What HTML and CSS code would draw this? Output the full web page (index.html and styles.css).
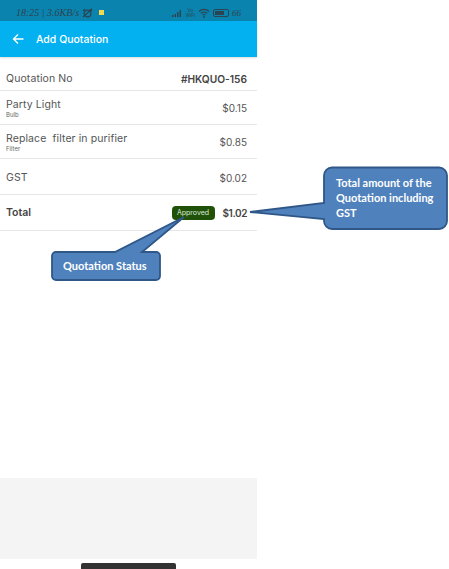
FILE: index.html
```html
<!DOCTYPE html>
<html>
<head>
<meta charset='utf-8'/>
<title>Add Quotation</title>
<link rel="stylesheet" href="styles.css">
</head>
<body>
<div class='phone'>
  <div class='status-bar'>
    <div class='status-left'>
      <span>18:25 | 3.6KB/s</span>
      <svg class='alarm' width='11' height='10' viewBox='0 0 11 10'>
        <circle cx='5.5' cy='5.5' r='3.4' fill='none' stroke='#2c4350' stroke-width='1.2'/>
        <path d='M1 3 3 1M10 3 8 1M1 9 10 1' stroke='#2c4350' stroke-width='1.1'/>
      </svg>
      <span class='note-icon'></span>
    </div>
    <div class='status-right'>
      <svg width='12' height='8' viewBox='0 0 12 8'>
        <path d='M1 6h1.500v2H1zM3.500 5H5v3H3.500zM6 3h1.500v5H6zM8.500 1H10v7H8.500z' fill='#2c4350'/>
      </svg>
      <span class='volte'>Vo<br>WiFi</span>
      <svg width='12' height='10' viewBox='0 0 12 10'>
        <path d='M1 3.500a7 7 0 0 1 10 0M2.800 5.400a4.500 4.500 0 0 1 6.400 0M4.500 7.200a2 2 0 0 1 3 0' fill='none' stroke='#2c4350' stroke-width='1.200'/>
        <circle cx='6' cy='9' r='.9' fill='#2c4350'/>
      </svg>
      <span class='battery'><span class='battery-fill'></span></span>
      <span class='battery-text'>66</span>
    </div>
  </div>
  <div class='app-bar'>
    <svg width='12' height='12' viewBox='0 0 12 12'>
      <path d='M11.500 6H1.500M6 1.500 1.500 6 6 10.500' fill='none' stroke='#fff' stroke-width='1.300'/>
    </svg>
    <span class='app-title'>Add Quotation</span>
  </div>
  <div class='row row-no'>
    <span class='label'>Quotation No</span>
    <span class='quote-no'>#HKQUO-156</span>
  </div>
  <div class='row row-item'>
    <div>
      <div class='label'>Party Light</div>
      <div class='sub'>Bulb</div>
    </div>
    <span class='amount'>$0.15</span>
  </div>
  <div class='row row-item'>
    <div>
      <div class='label'>Replace&nbsp; filter in purifier</div>
      <div class='sub'>Filter</div>
    </div>
    <span class='amount'>$0.85</span>
  </div>
  <div class='row row-gst'>
    <span class='label'>GST</span>
    <span class='amount'>$0.02</span>
  </div>
  <div class='row row-total'>
    <span class='total-label'>Total</span>
    <div class='total-right'>
      <span class='badge'>Approved</span>
      <span class='total-amount'>$1.02</span>
    </div>
  </div>
  <div class='spacer'></div>
  <div class='footer'></div>
  <div class='home-area'><div class='home-bar'></div></div>
</div>
<svg class='callouts' width='449' height='569' viewBox='0 0 449 569'>
  <path class='callout-shape' d='M332 167.500H439a8 8 0 0 1 8 8V221a8 8 0 0 1-8 8H332a8 8 0 0 1-8-8V219L250 212 324 203V175.500a8 8 0 0 1 8-8Z'/>
  <text class='callout-text' x='336' y='187'>Total amount of the</text>
  <text class='callout-text' x='336' y='202'>Quotation including</text>
  <text class='callout-text' x='336' y='217'>GST</text>
  <path class='callout-shape' d='M56 252H115L184 217 142 252H156a4 4 0 0 1 4 4V276a4 4 0 0 1-4 4H56a4 4 0 0 1-4-4V256a4 4 0 0 1 4-4Z'/>
  <text class='callout-text' x='63' y='270'>Quotation Status</text>
</svg>
</body>
</html>
```

FILE: styles.css
```css
* {
    box-sizing: border-box;
}
body {
    margin: 0;
    background: #fff;
    font-family: "Inter", "Liberation Sans", sans-serif;
    overflow: hidden;
}
.phone {
    width: 257px;
    height: 569px;
    display: flex;
    flex-direction: column;
    color: #555;
}
.status-bar {
    height: 21px;
    padding: 4px 16px 0 16px;
    background: #0a84ae;
    display: flex;
    justify-content: space-between;
    align-items: center;
    color: #2c4350;
}
.status-left {
    display: flex;
    align-items: center;
    gap: 3px;
    font-family: "Liberation Serif", serif;
    font-style: italic;
    font-size: 10px;
}
.note-icon {
    width: 5px;
    height: 5px;
    margin-left: 3px;
    background: #f2d94e;
}
.status-right {
    display: flex;
    align-items: center;
    gap: 3px;
}
.volte {
    font-size: 4.500px;
    line-height: 5px;
    text-align: center;
}
.battery {
    width: 16px;
    height: 8px;
    padding: 1px;
    border: 1px solid #2c4350;
    border-radius: 2px;
}
.battery-fill {
    display: block;
    width: 9px;
    height: 100%;
    background: #2c4350;
}
.battery-text {
    font-family: "Liberation Serif", serif;
    font-style: italic;
    font-size: 9px;
}
.app-bar {
    height: 36px;
    padding-left: 12px;
    background: #03b1f1;
    display: flex;
    align-items: center;
    gap: 12px;
    box-shadow: 0 1px 2px rgba(0, 0, 0, 0.15);
}
.app-title {
    color: #fff;
    font-size: 10.500px;
    font-weight: 500;
}
.row {
    padding: 0 10px 0 6px;
    display: flex;
    justify-content: space-between;
    align-items: center;
    border-bottom: 1px solid #e6e6e6;
}
.row-no {
    height: 34px;
    padding-top: 10px;
}
.row-item {
    height: 34px;
    padding-top: 1px;
}
.row-gst {
    height: 36px;
    padding-top: 2px;
}
.row-total {
    height: 36px;
}
.label {
    font-size: 10.500px;
    letter-spacing: 0.1px;
    line-height: 12px;
}
.sub {
    font-size: 6px;
    line-height: 7px;
    color: #666;
}
.quote-no {
    font-size: 10.200px;
    font-weight: 600;
    color: #444;
}
.amount {
    font-size: 10px;
}
.total-label {
    font-size: 10.500px;
    font-weight: 600;
    color: #444;
}
.total-right {
    display: flex;
    align-items: center;
    gap: 8px;
}
.badge {
    width: 43px;
    height: 14px;
    background: #1f5208;
    border-radius: 4px;
    color: #dfe9da;
    font-size: 7px;
    line-height: 14px;
    text-align: center;
}
.total-amount {
    font-size: 10px;
    font-weight: 600;
    letter-spacing: -0.4px;
    color: #444;
}
.spacer {
    flex: 1;
}
.footer {
    height: 81px;
    background: #f4f4f4;
}
.home-area {
    height: 10px;
    padding-top: 4px;
    display: flex;
    justify-content: center;
}
.home-bar {
    width: 95px;
    height: 6px;
    background: #333;
    border-radius: 2px 2px 0 0;
}
.callouts {
    position: absolute;
    left: 0;
    top: 0;
}
.callout-shape {
    fill: #4f81bd;
    stroke: #2f5788;
    stroke-width: 1.800;
}
.callout-text {
    fill: #fff;
    font-family: "Lato", "Liberation Sans", sans-serif;
    font-size: 11px;
    font-weight: 700;
}
```
